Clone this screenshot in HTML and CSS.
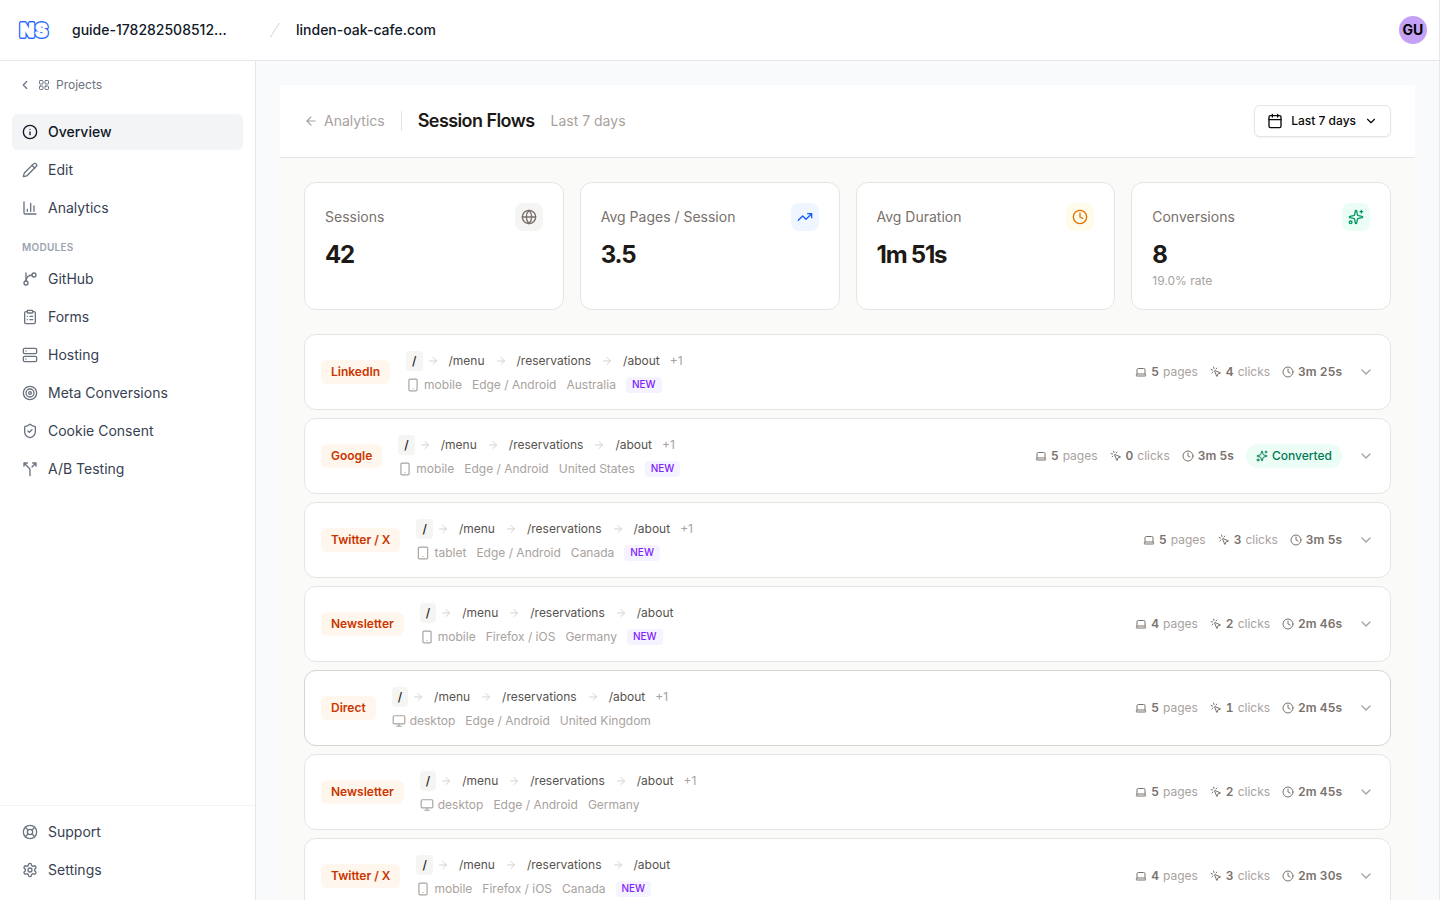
FILE: index.html
```html
<!DOCTYPE html>
<html lang="en">
  <head>
    <meta charset="UTF-8" />
    <meta name="viewport" content="width=device-width, initial-scale=1.0" />
    <title>Session Flows</title>
    <link rel="stylesheet" href="styles.css" />
  </head>
  <body>
    <!-- icons -->
    <svg class="sprite" width="0" height="0">
      <symbol id="chevron-left" viewBox="0 0 24 24"><path d="m15 18-6-6 6-6" /></symbol>
      <symbol id="chevron-down" viewBox="0 0 24 24"><path d="m6 9 6 6 6-6" /></symbol>
      <symbol id="arrow-left" viewBox="0 0 24 24"><path d="m12 19-7-7 7-7M19 12H5" /></symbol>
      <symbol id="arrow-right" viewBox="0 0 24 24"><path d="M5 12h14M12 5l7 7-7 7" /></symbol>
      <symbol id="grid" viewBox="0 0 24 24">
        <rect x="3" y="3" width="7" height="7" rx="1.5" /><rect x="14" y="3" width="7" height="7" rx="1.5" />
        <rect x="14" y="14" width="7" height="7" rx="1.5" /><rect x="3" y="14" width="7" height="7" rx="1.5" />
      </symbol>
      <symbol id="info" viewBox="0 0 24 24"><circle cx="12" cy="12" r="10" /><path d="M12 16v-4M12 8h.01" /></symbol>
      <symbol id="pencil" viewBox="0 0 24 24">
        <path d="M21.174 6.812a1 1 0 0 0-3.986-3.987L3.842 16.174a2 2 0 0 0-.5.83l-1.321 4.352a.5.5 0 0 0 .623.622l4.353-1.32a2 2 0 0 0 .83-.497z" /><path d="m15 5 4 4" />
      </symbol>
      <symbol id="chart" viewBox="0 0 24 24"><path d="M3 3v16a2 2 0 0 0 2 2h16M18 17V9M13 17V5M8 17v-3" /></symbol>
      <symbol id="branch" viewBox="0 0 24 24">
        <path d="M6 3v12" /><circle cx="18" cy="6" r="3" /><circle cx="6" cy="18" r="3" /><path d="M15 6a9 9 0 0 0-9 9" />
      </symbol>
      <symbol id="clipboard" viewBox="0 0 24 24">
        <rect x="8" y="2" width="8" height="4" rx="1" />
        <path d="M16 4h2a2 2 0 0 1 2 2v14a2 2 0 0 1-2 2H6a2 2 0 0 1-2-2V6a2 2 0 0 1 2-2h2M12 11h4M12 16h4M8 11h.01M8 16h.01" />
      </symbol>
      <symbol id="server" viewBox="0 0 24 24">
        <rect x="2" y="2" width="20" height="8" rx="2" /><rect x="2" y="14" width="20" height="8" rx="2" /><path d="M6 6h.01M6 18h.01" />
      </symbol>
      <symbol id="target" viewBox="0 0 24 24">
        <circle cx="12" cy="12" r="10" /><circle cx="12" cy="12" r="6" /><circle cx="12" cy="12" r="2" />
      </symbol>
      <symbol id="shield" viewBox="0 0 24 24">
        <path d="M20 13c0 5-3.5 7.5-7.66 8.95a1 1 0 0 1-.67-.01C7.5 20.5 4 18 4 13V6a1 1 0 0 1 1-1c2 0 4.5-1.2 6.24-2.72a1.17 1.17 0 0 1 1.52 0C14.51 3.81 17 5 19 5a1 1 0 0 1 1 1z" /><path d="m9 12 2 2 4-4" />
      </symbol>
      <symbol id="split" viewBox="0 0 24 24">
        <path d="M16 3h5v5M8 3H3v5M12 22v-8.3a4 4 0 0 0-1.172-2.872L3 3M15 9l6-6" />
      </symbol>
      <symbol id="lifebuoy" viewBox="0 0 24 24">
        <circle cx="12" cy="12" r="10" /><path d="m4.93 4.93 4.24 4.24M14.83 9.17l4.24-4.24M14.83 14.83l4.24 4.24M9.17 14.83l-4.24 4.24" /><circle cx="12" cy="12" r="4" />
      </symbol>
      <symbol id="settings" viewBox="0 0 24 24">
        <path d="M12.22 2h-.44a2 2 0 0 0-2 2v.18a2 2 0 0 1-1 1.73l-.43.25a2 2 0 0 1-2 0l-.15-.08a2 2 0 0 0-2.73.73l-.22.38a2 2 0 0 0 .73 2.73l.15.1a2 2 0 0 1 1 1.72v.51a2 2 0 0 1-1 1.74l-.15.09a2 2 0 0 0-.73 2.73l.22.38a2 2 0 0 0 2.73.73l.15-.08a2 2 0 0 1 2 0l.43.25a2 2 0 0 1 1 1.73V20a2 2 0 0 0 2 2h.44a2 2 0 0 0 2-2v-.18a2 2 0 0 1 1-1.73l.43-.25a2 2 0 0 1 2 0l.15.08a2 2 0 0 0 2.73-.73l.22-.39a2 2 0 0 0-.73-2.73l-.15-.08a2 2 0 0 1-1-1.74v-.5a2 2 0 0 1 1-1.74l.15-.09a2 2 0 0 0 .73-2.73l-.22-.38a2 2 0 0 0-2.73-.73l-.15.08a2 2 0 0 1-2 0l-.43-.25a2 2 0 0 1-1-1.73V4a2 2 0 0 0-2-2z" /><circle cx="12" cy="12" r="3" />
      </symbol>
      <symbol id="calendar" viewBox="0 0 24 24">
        <path d="M8 2v4M16 2v4M3 10h18" /><rect x="3" y="4" width="18" height="18" rx="2" />
      </symbol>
      <symbol id="globe" viewBox="0 0 24 24">
        <circle cx="12" cy="12" r="10" /><path d="M12 2a14.5 14.5 0 0 0 0 20 14.5 14.5 0 0 0 0-20M2 12h20" />
      </symbol>
      <symbol id="trending" viewBox="0 0 24 24"><path d="M16 7h6v6M22 7l-8.5 8.5-5-5L2 17" /></symbol>
      <symbol id="clock" viewBox="0 0 24 24"><circle cx="12" cy="12" r="10" /><path d="M12 6v6l4 2" /></symbol>
      <symbol id="sparkles" viewBox="0 0 24 24">
        <path d="M11.017 2.814a1 1 0 0 1 1.966 0l1.051 5.558a2 2 0 0 0 1.594 1.594l5.558 1.051a1 1 0 0 1 0 1.966l-5.558 1.051a2 2 0 0 0-1.594 1.594l-1.051 5.558a1 1 0 0 1-1.966 0l-1.051-5.558a2 2 0 0 0-1.594-1.594l-5.558-1.051a1 1 0 0 1 0-1.966l5.558-1.051a2 2 0 0 0 1.594-1.594z" /><path d="M20 2v4M22 4h-4" /><circle cx="4" cy="20" r="2" />
      </symbol>
      <symbol id="mobile" viewBox="0 0 24 24"><rect x="5" y="2" width="14" height="20" rx="2" /><path d="M12 18h.01" /></symbol>
      <symbol id="tablet" viewBox="0 0 24 24"><rect x="4" y="2" width="16" height="20" rx="2" /><path d="M12 18h.01" /></symbol>
      <symbol id="desktop" viewBox="0 0 24 24"><rect x="2" y="3" width="20" height="14" rx="2" /><path d="M8 21h8M12 17v4" /></symbol>
      <symbol id="laptop" viewBox="0 0 24 24">
        <path d="M18 5a2 2 0 0 1 2 2v8.526a2 2 0 0 0 .212.897l1.068 2.127a1 1 0 0 1-.9 1.45H3.62a1 1 0 0 1-.9-1.45l1.068-2.127A2 2 0 0 0 4 15.526V7a2 2 0 0 1 2-2zM20.054 15.987H3.946" />
      </symbol>
      <symbol id="click" viewBox="0 0 24 24">
        <path d="M14 4.1 12 6M5.1 8l-2.9-.8M6 12l-1.9 2M7.2 2.2 8 5.1" /><path d="M9.037 9.69a.498.498 0 0 1 .653-.653l11 4.5a.5.5 0 0 1-.074.949l-4.349 1.041a1 1 0 0 0-.74.739l-1.04 4.35a.5.5 0 0 1-.95.074z" />
      </symbol>
    </svg>

    <header class="topbar">
      <svg class="logo" viewBox="0 0 34 22">
        <defs><text id="ns" x="1.900" y="18.200">NS</text></defs>
        <use class="logo-outline" href="#ns" />
        <use class="logo-fill" href="#ns" />
      </svg>
      <span class="workspace">guide-178282508512...</span>
      <svg class="slash" viewBox="0 0 12 16"><path d="M1.5 15 10.500 1" /></svg>
      <span class="site">linden-oak-cafe.com</span>
      <div class="avatar">GU</div>
    </header>

    <div class="layout">
      <aside class="sidebar">
        <a class="back">
          <svg class="icon i14"><use href="#chevron-left" /></svg>
          <svg class="icon i12"><use href="#grid" /></svg>
          <span>Projects</span>
        </a>
        <nav class="nav">
          <a class="nav-item active"><svg class="icon i16"><use href="#info" /></svg>Overview</a>
          <a class="nav-item"><svg class="icon i16"><use href="#pencil" /></svg>Edit</a>
          <a class="nav-item"><svg class="icon i16"><use href="#chart" /></svg>Analytics</a>
        </nav>
        <div class="nav-title">MODULES</div>
        <nav class="nav">
          <a class="nav-item"><svg class="icon i16"><use href="#branch" /></svg>GitHub</a>
          <a class="nav-item"><svg class="icon i16"><use href="#clipboard" /></svg>Forms</a>
          <a class="nav-item"><svg class="icon i16"><use href="#server" /></svg>Hosting</a>
          <a class="nav-item"><svg class="icon i16"><use href="#target" /></svg>Meta Conversions</a>
          <a class="nav-item"><svg class="icon i16"><use href="#shield" /></svg>Cookie Consent</a>
          <a class="nav-item"><svg class="icon i16"><use href="#split" /></svg>A/B Testing</a>
        </nav>
        <nav class="nav nav-bottom">
          <a class="nav-item"><svg class="icon i16"><use href="#lifebuoy" /></svg>Support</a>
          <a class="nav-item"><svg class="icon i16"><use href="#settings" /></svg>Settings</a>
        </nav>
      </aside>

      <main class="main">
        <div class="page">
          <div class="page-header">
            <a class="crumb"><svg class="icon i14"><use href="#arrow-left" /></svg>Analytics</a>
            <span class="divider"></span>
            <h1>Session Flows</h1>
            <span class="period">Last 7 days</span>
            <button class="range">
              <svg class="icon i16"><use href="#calendar" /></svg>
              <span>Last 7 days</span>
              <svg class="icon i14"><use href="#chevron-down" /></svg>
            </button>
          </div>

          <div class="content">
            <div class="stats">
              <div class="card">
                <div class="card-head">Sessions<span class="badge stone"><svg class="icon i16"><use href="#globe" /></svg></span></div>
                <div class="value">42</div>
              </div>
              <div class="card">
                <div class="card-head">Avg Pages / Session<span class="badge blue"><svg class="icon i16"><use href="#trending" /></svg></span></div>
                <div class="value">3.5</div>
              </div>
              <div class="card">
                <div class="card-head">Avg Duration<span class="badge amber"><svg class="icon i16"><use href="#clock" /></svg></span></div>
                <div class="value">1m 51s</div>
              </div>
              <div class="card">
                <div class="card-head">Conversions<span class="badge green"><svg class="icon i16"><use href="#sparkles" /></svg></span></div>
                <div class="value">8</div>
                <div class="note">19.0% rate</div>
              </div>
            </div>

            <div class="sessions">
              <div class="session">
                <span class="source">LinkedIn</span>
                <div class="flow">
                  <div class="path">
                    <span class="step first">/</span><svg class="icon i12"><use href="#arrow-right" /></svg>
                    <span class="step">/menu</span><svg class="icon i12"><use href="#arrow-right" /></svg>
                    <span class="step">/reservations</span><svg class="icon i12"><use href="#arrow-right" /></svg>
                    <span class="step">/about</span><span class="more">+1</span>
                  </div>
                  <div class="meta">
                    <span class="device"><svg class="icon i14"><use href="#mobile" /></svg>mobile</span>
                    <span>Edge / Android</span><span>Australia</span><span class="new">NEW</span>
                  </div>
                </div>
                <div class="totals">
                  <span><svg class="icon i12"><use href="#laptop" /></svg><b>5</b> pages</span>
                  <span><svg class="icon i12"><use href="#click" /></svg><b>4</b> clicks</span>
                  <span><svg class="icon i12"><use href="#clock" /></svg><b>3m 25s</b></span>
                </div>
                <svg class="icon i16 toggle"><use href="#chevron-down" /></svg>
              </div>

              <div class="session">
                <span class="source">Google</span>
                <div class="flow">
                  <div class="path">
                    <span class="step first">/</span><svg class="icon i12"><use href="#arrow-right" /></svg>
                    <span class="step">/menu</span><svg class="icon i12"><use href="#arrow-right" /></svg>
                    <span class="step">/reservations</span><svg class="icon i12"><use href="#arrow-right" /></svg>
                    <span class="step">/about</span><span class="more">+1</span>
                  </div>
                  <div class="meta">
                    <span class="device"><svg class="icon i14"><use href="#mobile" /></svg>mobile</span>
                    <span>Edge / Android</span><span>United States</span><span class="new">NEW</span>
                  </div>
                </div>
                <div class="totals">
                  <span><svg class="icon i12"><use href="#laptop" /></svg><b>5</b> pages</span>
                  <span><svg class="icon i12"><use href="#click" /></svg><b>0</b> clicks</span>
                  <span><svg class="icon i12"><use href="#clock" /></svg><b>3m 5s</b></span>
                  <span class="converted"><svg class="icon i12"><use href="#sparkles" /></svg>Converted</span>
                </div>
                <svg class="icon i16 toggle"><use href="#chevron-down" /></svg>
              </div>

              <div class="session">
                <span class="source">Twitter / X</span>
                <div class="flow">
                  <div class="path">
                    <span class="step first">/</span><svg class="icon i12"><use href="#arrow-right" /></svg>
                    <span class="step">/menu</span><svg class="icon i12"><use href="#arrow-right" /></svg>
                    <span class="step">/reservations</span><svg class="icon i12"><use href="#arrow-right" /></svg>
                    <span class="step">/about</span><span class="more">+1</span>
                  </div>
                  <div class="meta">
                    <span class="device"><svg class="icon i14"><use href="#tablet" /></svg>tablet</span>
                    <span>Edge / Android</span><span>Canada</span><span class="new">NEW</span>
                  </div>
                </div>
                <div class="totals">
                  <span><svg class="icon i12"><use href="#laptop" /></svg><b>5</b> pages</span>
                  <span><svg class="icon i12"><use href="#click" /></svg><b>3</b> clicks</span>
                  <span><svg class="icon i12"><use href="#clock" /></svg><b>3m 5s</b></span>
                </div>
                <svg class="icon i16 toggle"><use href="#chevron-down" /></svg>
              </div>

              <div class="session">
                <span class="source">Newsletter</span>
                <div class="flow">
                  <div class="path">
                    <span class="step first">/</span><svg class="icon i12"><use href="#arrow-right" /></svg>
                    <span class="step">/menu</span><svg class="icon i12"><use href="#arrow-right" /></svg>
                    <span class="step">/reservations</span><svg class="icon i12"><use href="#arrow-right" /></svg>
                    <span class="step">/about</span>
                  </div>
                  <div class="meta">
                    <span class="device"><svg class="icon i14"><use href="#mobile" /></svg>mobile</span>
                    <span>Firefox / iOS</span><span>Germany</span><span class="new">NEW</span>
                  </div>
                </div>
                <div class="totals">
                  <span><svg class="icon i12"><use href="#laptop" /></svg><b>4</b> pages</span>
                  <span><svg class="icon i12"><use href="#click" /></svg><b>2</b> clicks</span>
                  <span><svg class="icon i12"><use href="#clock" /></svg><b>2m 46s</b></span>
                </div>
                <svg class="icon i16 toggle"><use href="#chevron-down" /></svg>
              </div>

              <div class="session hovered">
                <span class="source">Direct</span>
                <div class="flow">
                  <div class="path">
                    <span class="step first">/</span><svg class="icon i12"><use href="#arrow-right" /></svg>
                    <span class="step">/menu</span><svg class="icon i12"><use href="#arrow-right" /></svg>
                    <span class="step">/reservations</span><svg class="icon i12"><use href="#arrow-right" /></svg>
                    <span class="step">/about</span><span class="more">+1</span>
                  </div>
                  <div class="meta">
                    <span class="device"><svg class="icon i14"><use href="#desktop" /></svg>desktop</span>
                    <span>Edge / Android</span><span>United Kingdom</span>
                  </div>
                </div>
                <div class="totals">
                  <span><svg class="icon i12"><use href="#laptop" /></svg><b>5</b> pages</span>
                  <span><svg class="icon i12"><use href="#click" /></svg><b>1</b> clicks</span>
                  <span><svg class="icon i12"><use href="#clock" /></svg><b>2m 45s</b></span>
                </div>
                <svg class="icon i16 toggle"><use href="#chevron-down" /></svg>
              </div>

              <div class="session">
                <span class="source">Newsletter</span>
                <div class="flow">
                  <div class="path">
                    <span class="step first">/</span><svg class="icon i12"><use href="#arrow-right" /></svg>
                    <span class="step">/menu</span><svg class="icon i12"><use href="#arrow-right" /></svg>
                    <span class="step">/reservations</span><svg class="icon i12"><use href="#arrow-right" /></svg>
                    <span class="step">/about</span><span class="more">+1</span>
                  </div>
                  <div class="meta">
                    <span class="device"><svg class="icon i14"><use href="#desktop" /></svg>desktop</span>
                    <span>Edge / Android</span><span>Germany</span>
                  </div>
                </div>
                <div class="totals">
                  <span><svg class="icon i12"><use href="#laptop" /></svg><b>5</b> pages</span>
                  <span><svg class="icon i12"><use href="#click" /></svg><b>2</b> clicks</span>
                  <span><svg class="icon i12"><use href="#clock" /></svg><b>2m 45s</b></span>
                </div>
                <svg class="icon i16 toggle"><use href="#chevron-down" /></svg>
              </div>

              <div class="session">
                <span class="source">Twitter / X</span>
                <div class="flow">
                  <div class="path">
                    <span class="step first">/</span><svg class="icon i12"><use href="#arrow-right" /></svg>
                    <span class="step">/menu</span><svg class="icon i12"><use href="#arrow-right" /></svg>
                    <span class="step">/reservations</span><svg class="icon i12"><use href="#arrow-right" /></svg>
                    <span class="step">/about</span>
                  </div>
                  <div class="meta">
                    <span class="device"><svg class="icon i14"><use href="#mobile" /></svg>mobile</span>
                    <span>Firefox / iOS</span><span>Canada</span><span class="new">NEW</span>
                  </div>
                </div>
                <div class="totals">
                  <span><svg class="icon i12"><use href="#laptop" /></svg><b>4</b> pages</span>
                  <span><svg class="icon i12"><use href="#click" /></svg><b>3</b> clicks</span>
                  <span><svg class="icon i12"><use href="#clock" /></svg><b>2m 30s</b></span>
                </div>
                <svg class="icon i16 toggle"><use href="#chevron-down" /></svg>
              </div>
            </div>
          </div>
        </div>
      </main>
    </div>
  </body>
</html>
```

FILE: styles.css
```css
* {
  box-sizing: border-box;
}
body {
  margin: 0;
  height: 100vh;
  overflow: hidden;
  display: flex;
  flex-direction: column;
  font-family: Inter, sans-serif;
  font-size: 14px;
  line-height: 20px;
  color: #111827;
  background: #fff;
  border-right: 1px solid #e5e7eb;
}
.sprite {
  position: absolute;
}
.icon {
  flex: none;
  fill: none;
  stroke: currentColor;
  stroke-width: 2;
  stroke-linecap: round;
  stroke-linejoin: round;
}
.i12 {
  width: 12px;
  height: 12px;
}
.i14 {
  width: 14px;
  height: 14px;
}
.i16 {
  width: 16px;
  height: 16px;
}

/* top bar */
.topbar {
  flex: none;
  display: flex;
  align-items: center;
  height: 61px;
  padding: 0 12px 0 18px;
  border-bottom: 1px solid #e5e7eb;
  font-weight: 500;
}
/* white letters with a blue outline around them */
.logo {
  width: 34px;
  height: 22px;
  margin-right: 20px;
  font-size: 18.5px;
  font-weight: 900;
  letter-spacing: 1px;
  stroke-linejoin: round;
}
.logo-outline {
  fill: #2563ff;
  stroke: #2563ff;
  stroke-width: 3.8px;
}
.logo-fill {
  fill: #fff;
  stroke: #fff;
  stroke-width: 1.2px;
}
.workspace {
  width: 197px;
}
.slash {
  width: 12px;
  height: 16px;
  margin-right: 15px;
  fill: none;
  stroke: #d1d5db;
}
.avatar {
  width: 28px;
  height: 28px;
  margin-left: auto;
  border-radius: 50%;
  background: #c4a1f5;
  color: #000;
  font-weight: 700;
  line-height: 28px;
  text-align: center;
}

.layout {
  flex: 1;
  display: flex;
  min-height: 0;
}

/* sidebar */
.sidebar {
  flex: none;
  display: flex;
  flex-direction: column;
  width: 256px;
  border-right: 1px solid #e5e7eb;
}
.back {
  display: flex;
  align-items: center;
  height: 48px;
  margin-bottom: 5px;
  padding-left: 18px;
  gap: 6px;
  font-size: 12px;
  color: #6b7280;
}
.nav {
  display: flex;
  flex-direction: column;
  gap: 2px;
  padding: 0 12px;
}
.nav-item {
  display: flex;
  align-items: center;
  gap: 10px;
  height: 36px;
  padding: 0 10px;
  border-radius: 6px;
  color: #374151;
}
.nav-item .icon {
  color: #6b7280;
}
.nav-item.active {
  background: #f3f4f6;
  color: #111827;
  font-weight: 500;
}
.nav-item.active .icon {
  color: #111827;
}
.nav-title {
  padding: 11px 22px 4px;
  font-size: 10px;
  font-weight: 600;
  letter-spacing: 0.25px;
  color: #9ca3af;
}
.nav-bottom {
  margin-top: auto;
  padding: 8px 12px 12px;
  border-top: 1px solid #f3f4f6;
}

/* page */
.main {
  flex: 1;
  padding: 24px;
  background: #f9fafc;
}
.page {
  background: #fafaf9;
}
.page-header {
  display: flex;
  align-items: center;
  height: 73px;
  padding: 0 24px;
  background: #fff;
  border-bottom: 1px solid #e5e5e5;
}
.crumb {
  display: flex;
  align-items: center;
  gap: 6px;
  color: #a8a29e;
}
.divider {
  width: 1px;
  height: 20px;
  margin: 0 16px;
  background: #e7e5e4;
}
h1 {
  margin: 0 16px 0 0;
  font-size: 18px;
  font-weight: 600;
  letter-spacing: -0.58px;
  color: #1c1917;
}
.period {
  color: #a8a29e;
}
.range {
  display: flex;
  align-items: center;
  gap: 8px;
  height: 32px;
  margin-left: auto;
  padding: 0 12px;
  border: 1px solid #e5e5e5;
  border-radius: 6px;
  background: #fff;
  box-shadow: 0 1px 2px rgba(0, 0, 0, 0.05);
  font: 500 12px/16px Inter, sans-serif;
  color: #0a0a0a;
}
.content {
  padding: 24px;
}

/* stat cards */
.stats {
  display: grid;
  grid-template-columns: repeat(4, 1fr);
  gap: 16px;
  margin-bottom: 24px;
}
.card {
  height: 128px;
  padding: 20px;
  background: #fff;
  border: 1px solid #e7e5e4;
  border-radius: 12px;
}
.card-head {
  display: flex;
  align-items: center;
  justify-content: space-between;
  color: #78716c;
}
.badge {
  display: flex;
  padding: 6px;
  border-radius: 8px;
}
.stone {
  background: #f5f5f4;
  color: #78716c;
}
.blue {
  background: #eff6ff;
  color: #155dfc;
}
.amber {
  background: #fffbeb;
  color: #e17100;
}
.green {
  background: #ecfdf5;
  color: #009966;
}
.value {
  margin-top: 8px;
  font-size: 24px;
  font-weight: 700;
  line-height: 32px;
  letter-spacing: -1.2px;
  color: #1c1917;
}
.note {
  margin-top: 2px;
  font-size: 12px;
  line-height: 16px;
  color: #a8a29e;
}

/* session list */
.sessions {
  display: flex;
  flex-direction: column;
  gap: 8px;
}
.session {
  display: flex;
  align-items: center;
  gap: 16px;
  height: 76px;
  padding: 0 16px;
  background: #fff;
  border: 1px solid #e7e5e4;
  border-radius: 12px;
  font-size: 12px;
  line-height: 16px;
}
.session.hovered {
  border-color: #d6d3d1;
}
.source {
  padding: 4px 10px;
  border-radius: 6px;
  background: #fff7ed;
  color: #ca3500;
  font-weight: 600;
}
.path,
.meta,
.device,
.totals,
.totals span {
  display: flex;
  align-items: center;
}
.path {
  gap: 4px;
  margin-bottom: 6px;
  color: #d6d3d1;
}
.step {
  padding: 2px 6px;
  color: #57534e;
}
.first {
  border-radius: 4px;
  background: #f5f5f4;
  color: #1c1917;
  font-weight: 500;
}
.more {
  color: #a8a29e;
}
.meta {
  gap: 10px;
  height: 16px;
  color: #a8a29e;
}
.device {
  gap: 4px;
}
.new {
  height: 16px;
  padding: 0 6px;
  border-radius: 4px;
  background: #f5f3ff;
  color: #7f22fe;
  font-size: 10px;
  font-weight: 500;
  line-height: 15px;
}
.totals {
  gap: 12px;
  margin-left: auto;
  color: #a8a29e;
  font-variant-numeric: tabular-nums;
}
.totals span {
  gap: 4px;
}
.totals .icon,
.totals b {
  color: #78716c;
}
.totals b {
  font-weight: 600;
}
.totals .converted {
  padding: 4px 10px;
  border-radius: 12px;
  background: #ecfdf5;
  color: #007a55;
  font-weight: 500;
}
.totals .converted .icon {
  color: inherit;
}
.toggle {
  color: #a8a29e;
}
```
